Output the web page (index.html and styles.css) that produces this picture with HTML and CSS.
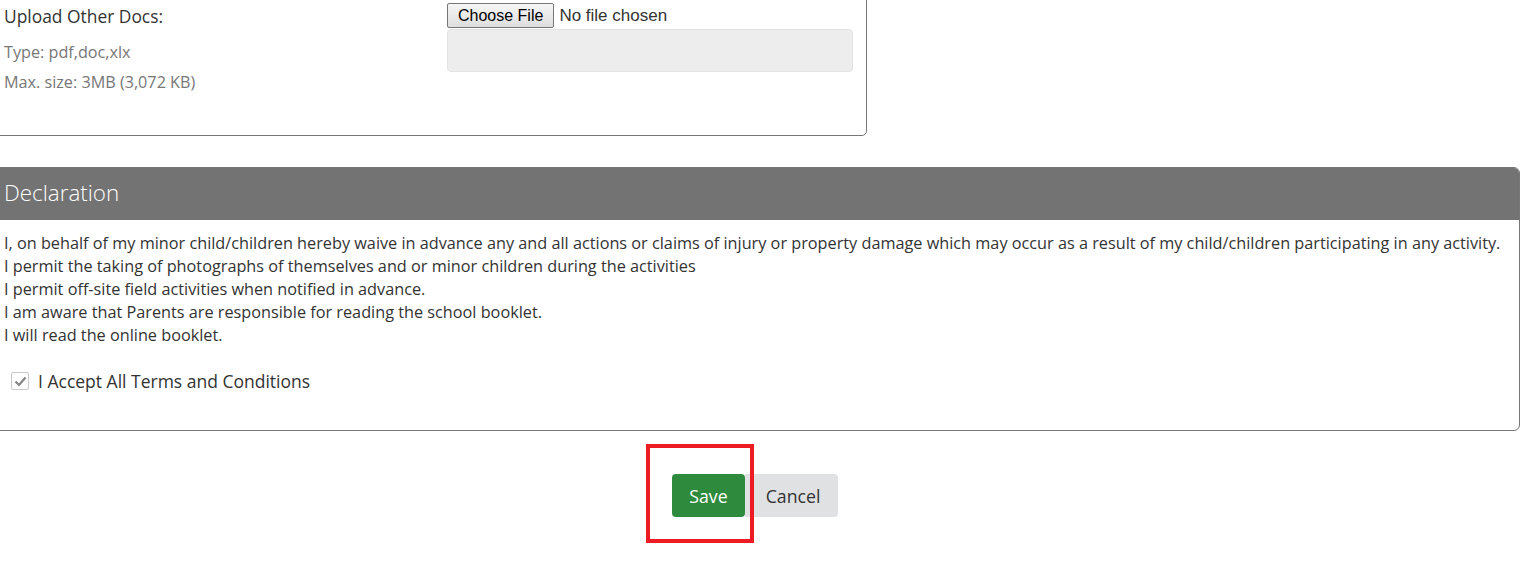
FILE: index.html
```html
<!DOCTYPE html>
<html lang="en">
<head>
    <meta charset="UTF-8">
    <meta name="viewport" content="width=device-width, initial-scale=1.0">
    <title>Registration - Documents</title>
    <link rel="stylesheet" href="styles.css">
</head>
<body>
    <div class="page">
        <div class="doc-panel">
            <div class="doc-row">
                <div class="doc-info">
                    <div class="doc-label">Upload Other Docs:</div>
                    <div class="doc-hint">Type: pdf,doc,xlx</div>
                    <div class="doc-hint">Max. size: 3MB (3,072 KB)</div>
                </div>
                <div class="doc-input">
                    <div class="file-line">
                        <button class="file-btn">Choose File</button>
                        <span class="file-name">No file chosen</span>
                    </div>
                    <div class="file-box"></div>
                </div>
            </div>
        </div>

        <div class="decl-panel">
            <div class="decl-head">Declaration</div>
            <div class="decl-body">
                <p>I, on behalf of my minor child/children hereby waive in advance any and all actions or claims of injury or property damage which may occur as a result of my child/children participating in any activity.</p>
                <p>I permit the taking of photographs of themselves and or minor children during the activities</p>
                <p>I permit off-site field activities when notified in advance.</p>
                <p>I am aware that Parents are responsible for reading the school booklet.</p>
                <p>I will read the online booklet.</p>
                <label class="accept">
                    <span class="check">
                        <svg width="13" height="11" viewBox="0 0 13 11"><path d="M1.5 5.5 L5 9 L11.5 1.5" fill="none" stroke="#858585" stroke-width="2.2"/></svg>
                    </span>
                    I Accept All Terms and Conditions
                </label>
            </div>
        </div>

        <div class="actions">
            <span class="save-wrap">
                <button class="btn btn-save">Save</button>
                <span class="highlight"></span>
            </span>
            <button class="btn btn-cancel">Cancel</button>
        </div>
    </div>
</body>
</html>
```

FILE: styles.css
```css
body {
    margin: 0;
    font-family: "Open Sans", "Liberation Sans", sans-serif;
    color: #333;
    background: #fff;
}
.page {
    margin-left: -3px;
    width: 1523px;
    padding-bottom: 40px;
}
.doc-panel {
    width: 868px;
    margin-top: -10px;
    border: 1px solid #777;
    border-radius: 0 0 5px 0;
    padding-bottom: 38px;
}
.doc-row {
    display: flex;
}
.doc-info {
    width: 443px;
    padding-left: 6px;
    padding-top: 12px;
}
.doc-label {
    font-size: 17.4px;
    line-height: 26px;
    margin-bottom: 8px;
}
.doc-hint {
    font-size: 16.2px;
    color: #777;
    line-height: 30px;
}
.doc-input {
    width: 406px;
    padding-top: 11px;
}
.file-line {
    display: flex;
    align-items: center;
    height: 27px;
    font-family: "Liberation Sans", Arial, sans-serif;
    font-size: 16px;
}
.file-btn {
    font-family: "Liberation Sans", Arial, sans-serif;
    font-size: 16px;
    height: 25px;
    padding: 0 10px;
    margin: 0 5px 0 0;
    border: 1px solid #767676;
    border-radius: 2px;
    background: linear-gradient(#f6f6f6, #dedede);
    color: #000;
}
.file-line .file-name {
    color: #333;
    font-size: 17px;
}
.file-box {
    height: 41px;
    background: #ededed;
    border: 1px solid #e3e3e3;
    border-radius: 4px;
}
.decl-panel {
    margin-top: 31px;
    border: 1px solid #777;
    border-radius: 0 6px 6px 0;
}
.decl-head {
    background: #737373;
    color: #fff;
    font-size: 22.4px;
    font-weight: 300;
    height: 52px;
    line-height: 50px;
    padding-left: 6px;
    border-radius: 0 5px 0 0;
}
.decl-body {
    padding: 12px 6px 37px;
    font-size: 16.25px;
}
.decl-body p {
    margin: 0;
    line-height: 23px;
}
.accept {
    display: flex;
    align-items: center;
    gap: 9px;
    margin-top: 22px;
    padding-left: 7px;
    font-size: 17.5px;
    line-height: 24px;
}
.check {
    width: 16px;
    height: 16px;
    border: 1px solid #c8c8c8;
    border-radius: 2px;
    display: flex;
    align-items: center;
    justify-content: center;
}
.actions {
    display: flex;
    justify-content: center;
    margin-top: 43px;
    padding-right: 7px;
}
.save-wrap {
    position: relative;
    display: flex;
}
.btn {
    font-family: "Open Sans", "Liberation Sans", sans-serif;
    font-size: 17.7px;
    height: 43px;
    border: none;
    padding: 0;
}
.btn-save {
    width: 73px;
    background: #2e8b3d;
    color: #fff;
    border-radius: 4px;
}
.btn-cancel {
    width: 93px;
    padding-left: 3px;
    background: #e0e1e3;
    color: #333;
    border-radius: 0 4px 4px 0;
}
.highlight {
    position: absolute;
    top: -30px;
    left: -26px;
    right: -9px;
    bottom: -26px;
    border: 4px solid #ed1c24;
}
```
